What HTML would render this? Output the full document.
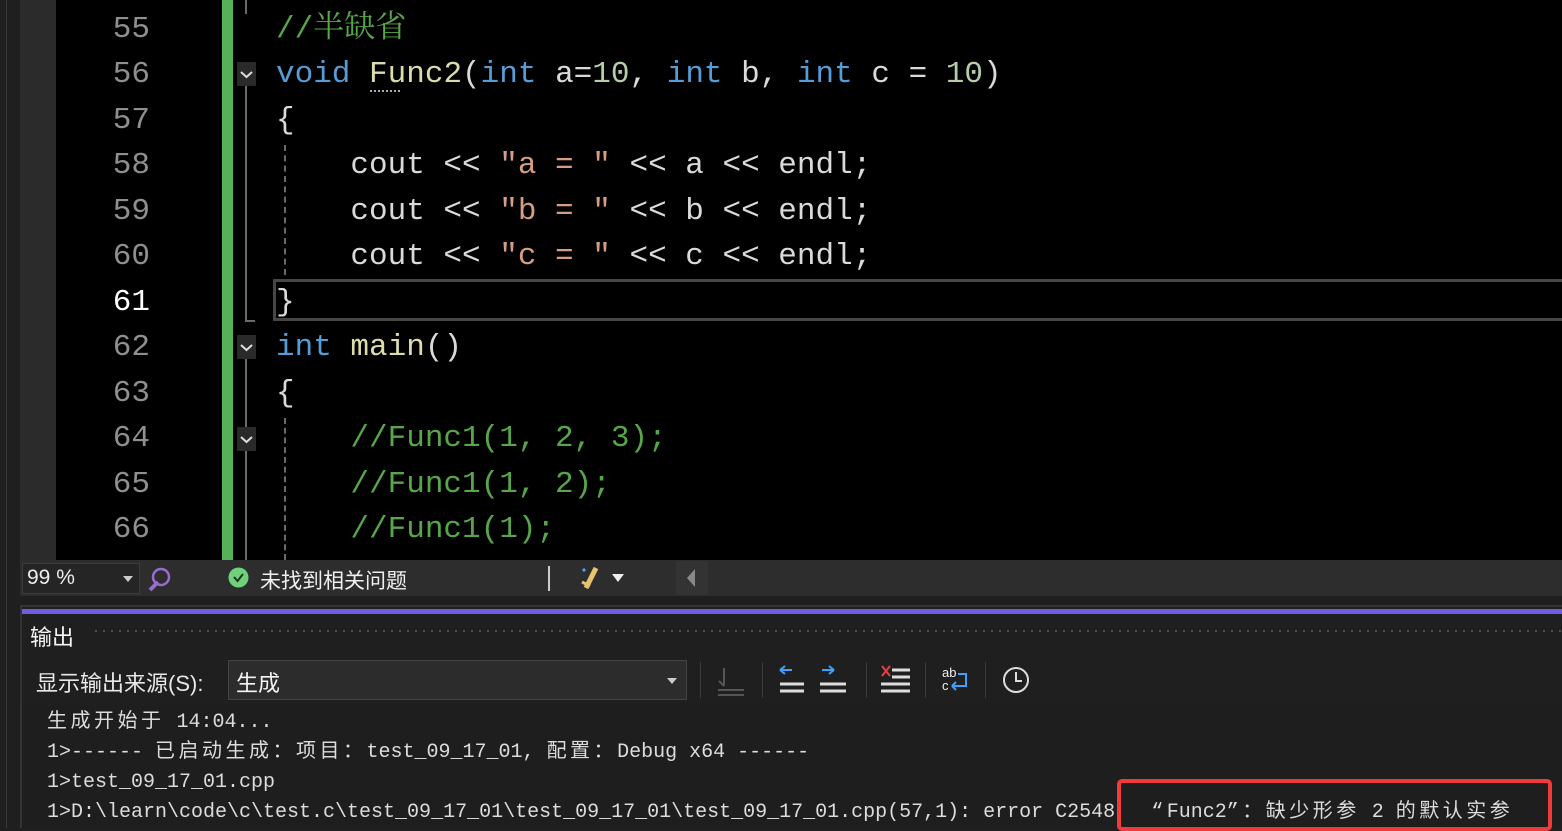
<!DOCTYPE html>
<html><head><meta charset="utf-8"><style>
*{margin:0;padding:0;box-sizing:border-box}
body{width:1562px;height:828px;background:#1f1f1f;position:relative;overflow:hidden;font-family:"Liberation Sans","Noto Sans CJK SC",sans-serif}
.a{position:absolute}
.code{font-family:"Liberation Mono","Noto Serif CJK SC",monospace;font-size:31px;line-height:45.45px;white-space:pre;color:#dadada}
.ln{color:#8f8f8f;text-align:right;width:150px;left:0}
.k{color:#569cd6}.f{color:#dcdcaa}.n{color:#b5cea8}.s{color:#d69d85}.c{color:#57a64a}
.fold{width:19px;height:24px;background:#2a2a2a;left:237px}
.out{font-family:"Liberation Mono","Noto Sans CJK SC",monospace;font-size:20px;line-height:30px;white-space:pre;color:#dcdcdc}
.z{letter-spacing:3.5px}
</style></head><body>
<div class="a" style="left:6px;top:0;width:1px;height:828px;background:#3a3a3a"></div>
<div class="a" style="left:20px;top:0;width:36px;height:560px;background:#2b2b2b"></div>
<div class="a" style="left:56px;top:0;width:1506px;height:560px;background:#000"></div>
<div class="a" style="left:222px;top:0;width:11px;height:560px;background:#57b15a"></div>
<div class="a" style="left:245px;top:0;width:2px;height:14px;background:#6a6a6a"></div>
<div class="a" style="left:245px;top:86px;width:2px;height:236px;background:#6a6a6a"></div>
<div class="a" style="left:245px;top:320px;width:10px;height:2px;background:#6a6a6a"></div>
<div class="a" style="left:245px;top:359px;width:2px;height:201px;background:#6a6a6a"></div>
<div class="a" style="left:284px;top:145px;width:0;height:130px;border-left:2px dashed #6a6a6a"></div>
<div class="a" style="left:284px;top:418px;width:0;height:142px;border-left:2px dashed #6a6a6a"></div>
<div class="a fold" style="top:62px"></div>
<div class="a fold" style="top:335px"></div>
<div class="a fold" style="top:427px"></div>
<svg class="a" style="left:237px;top:62px" width="19" height="24"><path d="M4 10 L9.5 15 L15 10" stroke="#ddd" stroke-width="2" fill="none"/></svg>
<svg class="a" style="left:237px;top:335px" width="19" height="24"><path d="M4 10 L9.5 15 L15 10" stroke="#ddd" stroke-width="2" fill="none"/></svg>
<svg class="a" style="left:237px;top:427px" width="19" height="24"><path d="M4 10 L9.5 15 L15 10" stroke="#ddd" stroke-width="2" fill="none"/></svg>
<div class="a" style="left:273px;top:279px;width:1300px;height:42px;border:3px solid #464646"></div>
<div class="a code ln" style="top:7px">55
56
57
58
59
60
<span style="color:#fff">61</span>
62
63
64
65
66</div>
<div class="a code" style="left:276px;top:7px"><span class="c">//半缺省</span>
<span class="k">void</span> <span class="f">Func2</span>(<span class="k">int</span> a=<span class="n">10</span>, <span class="k">int</span> b, <span class="k">int</span> c = <span class="n">10</span>)
{
    cout &lt;&lt; <span class="s">"a = "</span> &lt;&lt; a &lt;&lt; endl;
    cout &lt;&lt; <span class="s">"b = "</span> &lt;&lt; b &lt;&lt; endl;
    cout &lt;&lt; <span class="s">"c = "</span> &lt;&lt; c &lt;&lt; endl;
}
<span class="k">int</span> <span class="f">main</span>()
{
    <span class="c">//Func1(1, 2, 3);</span>
    <span class="c">//Func1(1, 2);</span>
    <span class="c">//Func1(1);</span></div>
<div class="a" style="left:370px;top:90px;width:30px;border-top:2px dotted #aaa"></div>
<div class="a" style="left:20px;top:560px;width:1542px;height:36px;background:#2d2d2d"></div>
<div class="a" style="left:22px;top:563px;width:118px;height:31px;background:#252525;border:1px solid #3c3c3c"></div>
<div class="a" style="left:27px;top:566px;font-size:21px;color:#eee">99 %</div>
<svg class="a" style="left:122px;top:575px" width="12" height="8"><path d="M1 1H11L6 7Z" fill="#ccc"/></svg>
<svg class="a" style="left:146px;top:566px" width="28" height="28"><circle cx="15" cy="11" r="8" fill="none" stroke="#9a6bd1" stroke-width="2.5"/><path d="M4 24 L12 16" stroke="#9a6bd1" stroke-width="4"/></svg>
<svg class="a" style="left:228px;top:567px" width="21" height="21"><circle cx="10.5" cy="10.5" r="10" fill="#6fd17a"/><path d="M6 10 L9.5 14 L15 7" stroke="#1b3a1e" stroke-width="2" fill="none"/></svg>
<div class="a" style="left:260px;top:565px;font-size:21px;color:#f0f0f0">未找到相关问题</div>
<div class="a" style="left:548px;top:566px;width:2px;height:25px;background:#ccc"></div>
<svg class="a" style="left:576px;top:564px" width="30" height="28"><path d="M20 4 L10 24" stroke="#e7c36d" stroke-width="5"/><path d="M6 18 L14 22" stroke="#e7c36d" stroke-width="3"/><path d="M8 4 l2 2 l-2 2 l-2-2z" fill="#4ea7ff"/></svg>
<svg class="a" style="left:611px;top:573px" width="14" height="10"><path d="M1 1H13L7 9Z" fill="#eee"/></svg>
<div class="a" style="left:676px;top:561px;width:32px;height:34px;background:#333"></div>
<svg class="a" style="left:685px;top:568px" width="12" height="20"><path d="M10 1 L2 10 L10 19Z" fill="#888"/></svg>
<div class="a" style="left:20px;top:605px;width:1542px;height:223px;background:#1f1f1f;border-left:2px solid #333;border-top:2px solid #333"></div>
<div class="a" style="left:22px;top:609px;width:1540px;height:5px;background:#6f5de0"></div>
<div class="a" style="left:30px;top:620px;font-size:22px;color:#f4f4f4">输出</div>
<div class="a" style="left:92px;top:627px;width:1470px;height:10px;background-image:radial-gradient(#5a5a5a 0.9px,transparent 1.1px);background-size:8px 8px;background-position:0 0"></div>
<div class="a" style="left:36px;top:666px;font-size:22px;color:#e8e8e8">显示输出来源(S):</div>
<div class="a" style="left:228px;top:660px;width:459px;height:40px;background:#2c2c2c;border:1px solid #444"></div>
<div class="a" style="left:236px;top:666px;font-size:22px;color:#f4f4f4">生成</div>
<svg class="a" style="left:666px;top:677px" width="12" height="8"><path d="M1 1H11L6 7Z" fill="#ccc"/></svg>
<div class="a" style="left:700px;top:662px;width:1px;height:36px;background:#3c3c3c"></div>
<div class="a" style="left:762px;top:662px;width:1px;height:36px;background:#3c3c3c"></div>
<div class="a" style="left:866px;top:662px;width:1px;height:36px;background:#3c3c3c"></div>
<div class="a" style="left:925px;top:662px;width:1px;height:36px;background:#3c3c3c"></div>
<div class="a" style="left:985px;top:662px;width:1px;height:36px;background:#3c3c3c"></div>
<svg class="a" style="left:700px;top:660px" width="330" height="40">
<g stroke="#555" stroke-width="2" fill="none"><path d="M24 8 V26 M19 21 L24 26 M18 30 H44 M18 35 H44"/></g>
<g stroke="#3ea0ff" stroke-width="2" fill="none"><path d="M80 10 H92 M80 10 L85 6 M80 10 L85 14"/><path d="M122 10 H134 M134 10 L129 6 M134 10 L129 14"/></g>
<g stroke="#ddd" stroke-width="3"><path d="M80 24 H104 M80 31 H104"/><path d="M120 24 H146 M120 31 H146"/><path d="M181 24 H210 M181 31 H210 M192 10 H210 M192 17 H210"/></g>
<path d="M182 6 L190 16 M190 6 L182 16" stroke="#e84040" stroke-width="2"/>
<text x="242" y="17" fill="#eee" font-size="13" font-family="Liberation Sans">ab</text><text x="242" y="30" fill="#eee" font-size="13" font-family="Liberation Sans">c</text>
<path d="M258 14 H266 V26 H252 M252 26 L256 22 M252 26 L256 30" stroke="#3ea0ff" stroke-width="2" fill="none"/>
<circle cx="316" cy="20" r="12" stroke="#ddd" stroke-width="2" fill="none"/><path d="M316 12 V21 H322" stroke="#ddd" stroke-width="2" fill="none"/>
</svg>
<div class="a" style="left:22px;top:706px;width:1540px;height:122px;background:#1e1e1e"></div>
<div class="a out" style="left:47px;top:708px"><span class="z">生成开始于</span> 14:04...
1&gt;------ <span class="z">已启动生成：项目：</span>test_09_17_01, <span class="z">配置：</span>Debug x64 ------
1&gt;test_09_17_01.cpp
1&gt;D:\learn\code\c\test.c\test_09_17_01\test_09_17_01\test_09_17_01.cpp(57,1): error C2548   <span class="z">“</span>Func2<span class="z">”：缺少形参</span> 2 <span class="z">的默认实参</span></div>
<div class="a" style="left:1117px;top:779px;width:435px;height:52px;border:4px solid #f23a3a;border-radius:5px"></div>
</body></html>
